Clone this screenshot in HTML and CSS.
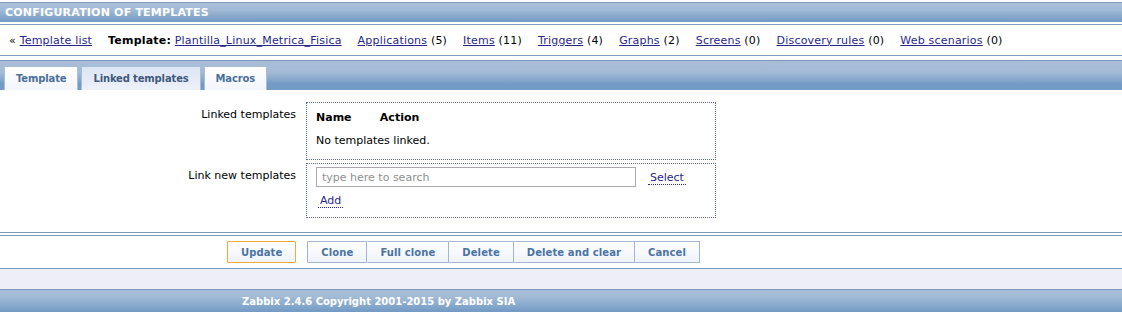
FILE: index.html
```html
<!DOCTYPE html>
<html lang="en">
<head>
    <meta charset="UTF-8">
    <title>Configuration of templates</title>
    <link rel="stylesheet" href="styles.css">
</head>
<body>

    <div class="page-header">CONFIGURATION OF TEMPLATES</div>

    <div class="nav-row">
        <span class="crumb">&laquo; <a href="#">Template list</a></span>
        <span class="crumb"><b>Template:</b> <a href="#">Plantilla_Linux_Metrica_Fisica</a></span>
        <span class="crumb"><a href="#">Applications</a> (5)</span>
        <span class="crumb"><a href="#">Items</a> (11)</span>
        <span class="crumb"><a href="#">Triggers</a> (4)</span>
        <span class="crumb"><a href="#">Graphs</a> (2)</span>
        <span class="crumb"><a href="#">Screens</a> (0)</span>
        <span class="crumb"><a href="#">Discovery rules</a> (0)</span>
        <span class="crumb"><a href="#">Web scenarios</a> (0)</span>
    </div>

    <div class="tab-bar">
        <div class="tab">Template</div>
        <div class="tab active">Linked templates</div>
        <div class="tab">Macros</div>
    </div>

    <div class="form-list">
        <div class="form-row">
            <div class="form-label">Linked templates</div>
            <div class="form-box">
                <div class="linked-head">
                    <span class="col-name">Name</span>
                    <span>Action</span>
                </div>
                <div class="linked-empty">No templates linked.</div>
            </div>
        </div>
        <div class="form-row">
            <div class="form-label">Link new templates</div>
            <div class="form-box">
                <div class="search-line">
                    <input class="search-input" type="text" placeholder="type here to search">
                    <span class="link-action">Select</span>
                </div>
                <span class="link-action add">Add</span>
            </div>
        </div>
    </div>

    <div class="button-row">
        <button class="btn main">Update</button>
        <div class="btn-group">
            <button class="btn">Clone</button>
            <button class="btn">Full clone</button>
            <button class="btn">Delete</button>
            <button class="btn">Delete and clear</button>
            <button class="btn">Cancel</button>
        </div>
    </div>

    <div class="spacer-strip"></div>

    <div class="page-footer">Zabbix 2.4.6 Copyright 2001-2015 by Zabbix SIA</div>

</body>
</html>
```

FILE: styles.css
```css
body {
    margin: 0;
    font-family: "DejaVu Sans", Verdana, sans-serif;
    font-size: 11px;
    color: #000;
    background: #fff;
}

/* Blue title bar */
.page-header {
    margin-top: 2px;
    height: 19px;
    line-height: 20px;
    padding-left: 5px;
    border-top: 1px solid #7e9aba;
    background: linear-gradient(to bottom, #a9bfd9, #a3bbd6 35%, #7199c4);
    color: #fff;
    font-weight: bold;
    letter-spacing: 0.2px;
}

/* Breadcrumb links */
.nav-row {
    margin-top: 2px;
    height: 30px;
    display: flex;
    align-items: center;
    gap: 16px;
    padding-left: 9px;
    border-top: 1px solid #7e9aba;
    border-bottom: 1px solid #7e9aba;
    letter-spacing: 0.2px;
}

.nav-row a {
    color: #27278a;
}

/* Tabs */
.tab-bar {
    margin-top: 4px;
    height: 24px;
    padding: 5px 0 0 4px;
    display: flex;
    gap: 3px;
    align-items: flex-end;
    border-top: 1px solid #7e9aba;
    background: linear-gradient(to bottom, #a8bed8, #a3bbd6 40%, #729ac4 80%, #729ac4);
}

.tab {
    height: 23px;
    line-height: 24px;
    padding: 0 11px;
    border: 1px solid #a9bdd4;
    border-bottom: none;
    background: linear-gradient(to bottom, #ffffff, #f2f5fc);
    color: #4a6f98;
    font-size: 10px;
    font-weight: bold;
    letter-spacing: -0.15px;
}

.tab.active {
    background: linear-gradient(to bottom, #dbe5f3, #edf1fa);
    color: #3f5a7c;
}

/* Form */
.form-list {
    padding: 12px 0 11px;
    border-bottom: 1px solid #7e9aba;
}

.form-row {
    display: flex;
    margin-bottom: 3px;
}

.form-label {
    width: 306px;
    padding: 6px 10px 0 0;
    box-sizing: border-box;
    text-align: right;
}

.form-box {
    width: 390px;
    padding: 7px 9px 8px;
    border: 1px dotted #5d6db4;
}

.linked-head {
    font-weight: bold;
    line-height: 15px;
}

.col-name {
    display: inline-block;
    width: 60px;
}

.linked-empty {
    margin-top: 8px;
    line-height: 15px;
    padding-bottom: 3px;
}

.search-line {
    display: flex;
    align-items: flex-start;
    gap: 12px;
    margin-top: -4px;
}

.search-input {
    width: 320px;
    height: 20px;
    box-sizing: border-box;
    border: 1px solid #a9a9a9;
    padding: 0 5px;
    font-family: inherit;
    font-size: 11px;
}

.search-input::placeholder {
    color: #909090;
}

.link-action {
    color: #27278a;
    border-bottom: 1px dotted #27278a;
    padding: 0 2px;
    line-height: 13px;
    margin-top: 4px;
}

.link-action.add {
    display: inline-block;
    margin: 7px 0 1px 2px;
}

/* Buttons */
.button-row {
    display: flex;
    gap: 11px;
    margin-top: 2px;
    padding: 5px 0 5px 227px;
    border-top: 1px solid #7e9aba;
    border-bottom: 1px solid #7e9aba;
}

.btn-group {
    display: flex;
}

.btn {
    height: 22px;
    padding: 0 13px;
    border: 1px solid #a2b6d0;
    background: linear-gradient(to bottom, #ffffff, #eef3fa);
    color: #4a73a4;
    font-family: inherit;
    font-size: 10px;
    font-weight: bold;
    letter-spacing: 0.1px;
    border-radius: 1px;
}

.btn-group .btn + .btn {
    border-left: none;
}

.btn.main {
    border-color: #f6a93b;
}

.spacer-strip {
    height: 20px;
    background: #eeeef7;
    border-bottom: 1px solid #7e9aba;
}

/* Footer */
.page-footer {
    height: 22px;
    line-height: 24px;
    padding-left: 242px;
    background: linear-gradient(to bottom, #a8bed8, #a3bbd6 30%, #729ac4);
    color: #fff;
    font-size: 10px;
    font-weight: bold;
}
```
